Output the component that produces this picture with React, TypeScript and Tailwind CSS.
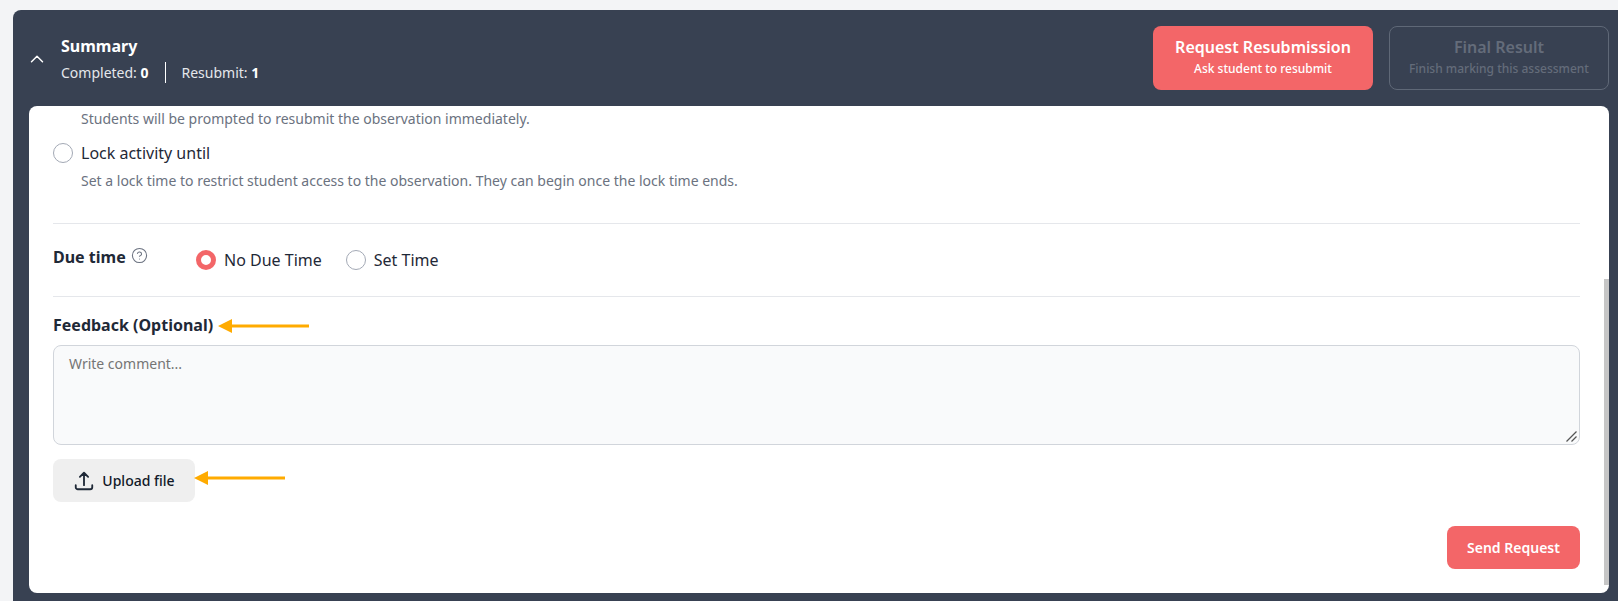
import { ChevronUp, CircleHelp } from "lucide-react";

function Radio({ checked = false }: { checked?: boolean }) {
  return checked ? (
    <span className="block size-5 shrink-0 rounded-full border-[5px] border-[#f36668] bg-white" />
  ) : (
    <span className="block size-5 shrink-0 rounded-full border border-[#a3a9b5] bg-white" />
  );
}

function Arrow({ className }: { className: string }) {
  return (
    <svg className={className} width="91" height="14" viewBox="0 0 91 14">
      <path d="M0 7 L14 0 V5.5 H91 V8.5 H14 V14 Z" fill="#ffab00" />
    </svg>
  );
}

function UploadTray() {
  return (
    <svg className="size-[22px] text-[#1f2937]" viewBox="0 0 24 24" fill="none" stroke="currentColor" strokeWidth="2" strokeLinecap="round" strokeLinejoin="round">
      <path d="M3 16.5v2.25A2.25 2.25 0 0 0 5.25 21h13.5A2.25 2.25 0 0 0 21 18.75V16.5m-13.5-9L12 3m0 0 4.5 4.5M12 3v13.5" />
    </svg>
  );
}

export default function App() {
  return (
    <div className="h-[601px] overflow-hidden bg-[#f3f4f6] pt-2.5 pl-[13px] font-['Noto_Sans',sans-serif]">
      <div className="h-[591px] rounded-tl-lg bg-[#384152] pr-[9px] pl-4">
        <div className="flex h-[96px] items-start justify-between">
          <div className="flex items-center pt-6">
            <ChevronUp className="mr-[13px] -ml-[3px] size-[22px] text-white" strokeWidth={1.6} />
            <div>
              <div className="text-base leading-6 font-bold text-white">Summary</div>
              <div className="mt-1 flex items-center text-sm leading-5 text-[#e5e7eb]">
                <span>
                  Completed: <b className="text-white">0</b>
                </span>
                <span className="mx-4 h-[21px] w-px bg-white" />
                <span>
                  Resubmit: <b className="text-white">1</b>
                </span>
              </div>
            </div>
          </div>
          <div className="flex gap-4 pt-4">
            <button className="flex h-16 w-[220px] flex-col items-center justify-center rounded-lg bg-[#f36668] pb-0.5 text-white">
              <span className="text-base leading-6 font-semibold">Request Resubmission</span>
              <span className="text-xs leading-5 font-medium">Ask student to resubmit</span>
            </button>
            <button className="flex h-16 w-[220px] flex-col items-center justify-center rounded-lg border border-[#5f6877] pb-0.5 text-[#646c7a]">
              <span className="text-base leading-6 font-semibold">Final Result</span>
              <span className="text-xs leading-5 font-medium">Finish marking this assessment</span>
            </button>
          </div>
        </div>

        <div className="relative h-[487px] overflow-hidden rounded-lg bg-white pt-1 pr-[29px] pl-6">
          <p className="pl-7 text-sm leading-[18px] text-[#6b7280]">
            Students will be prompted to resubmit the observation immediately.
          </p>
          <div className="mt-[13px] flex items-center gap-2 text-base leading-6 text-[#1f2937]">
            <Radio />
            Lock activity until
          </div>
          <p className="mt-1.5 pl-7 text-sm leading-5 text-[#6b7280]">
            Set a lock time to restrict student access to the observation. They can begin once the lock time ends.
          </p>

          <div className="mt-8 h-px bg-[#e5e7eb]" />

          <div className="flex h-[72px] items-center">
            <div className="-mt-1.5 flex w-[143px] items-center text-base font-bold text-[#1f2937]">
              Due time
              <CircleHelp className="mb-1 ml-[5px] size-[17px] text-[#6b7280]" strokeWidth={1.5} />
            </div>
            <label className="flex items-center gap-2 text-base text-[#1f2937]">
              <Radio checked />
              No Due Time
            </label>
            <label className="ml-6 flex items-center gap-2 text-base text-[#1f2937]">
              <Radio />
              Set Time
            </label>
          </div>

          <div className="h-px bg-[#e5e7eb]" />

          <div className="mt-[17px] text-base leading-[22px] font-bold text-[#1f2937]">Feedback (Optional)</div>
          <textarea
            className="mt-[9px] block h-[100px] w-full resize-none rounded-lg border border-[#d1d5db] bg-[#f9fafb] px-[15px] py-2 text-sm leading-5 outline-none placeholder:text-[#757575]"
            placeholder="Write comment..."
          />
          <button className="mt-[14px] flex h-[43px] w-[142px] items-center justify-center gap-[7px] rounded-lg bg-[#efefef] text-sm font-medium text-[#111827]">
            <UploadTray />
            Upload file
          </button>
          <div className="mt-6 flex justify-end">
            <button className="h-[43px] w-[133px] rounded-lg bg-[#f36668] text-sm font-semibold text-white">
              Send Request
            </button>
          </div>

          {/* annotation arrows, textarea grip + scrollbar thumb sit on top of the card */}
          <Arrow className="absolute top-[213px] left-[189px]" />
          <Arrow className="absolute top-[365px] left-[165px]" />
          <svg className="absolute top-[325px] left-[1537px]" width="11" height="11" viewBox="0 0 11 11">
            <path d="M0.5 10.5 L10.5 0.5 M5.5 10.5 L10.5 5.5" stroke="#555" strokeWidth="1.3" />
          </svg>
          <div className="absolute top-[173px] right-0 bottom-2 w-[5px] bg-[#c6c6c6]" />
        </div>
      </div>
    </div>
  );
}
